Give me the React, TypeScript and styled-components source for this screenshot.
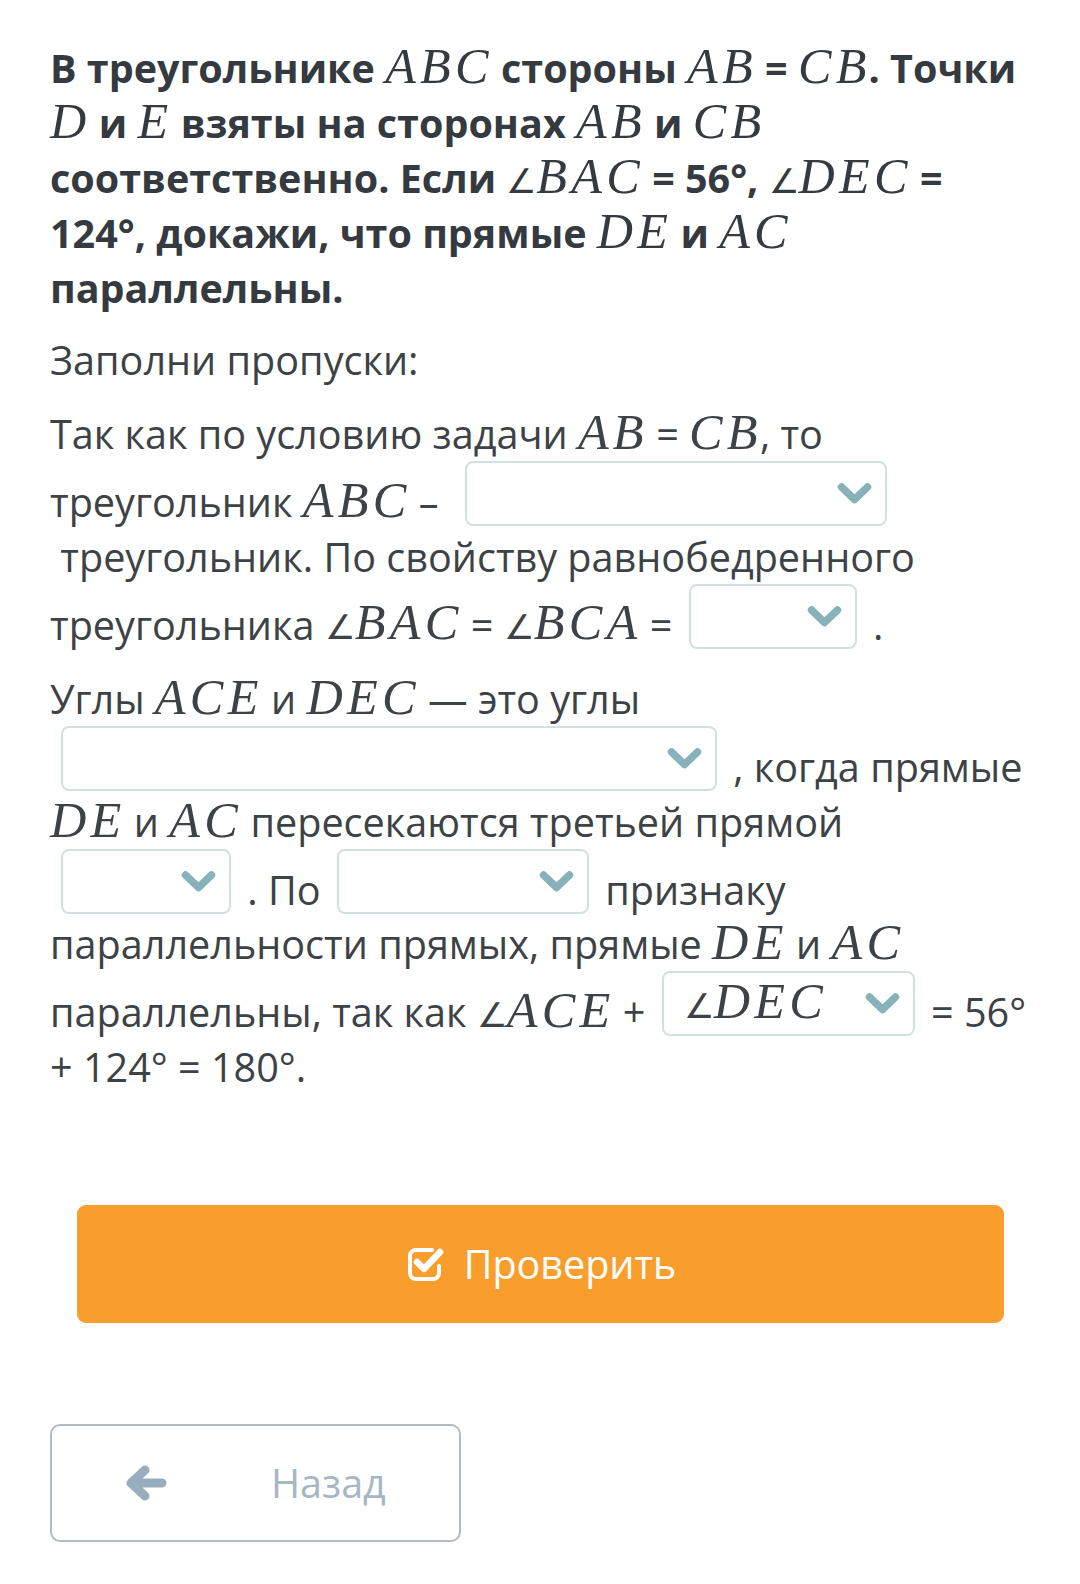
import React from "react";
import styled, { createGlobalStyle } from "styled-components";

const Global = createGlobalStyle`
  html, body { margin: 0; padding: 0; background: #ffffff; }
  body { font-family: "Open Sans", "Noto Sans", sans-serif; }
`;

const Page = styled.main`
  box-sizing: border-box;
  width: 1080px;
  padding: 41px 36px 60px 50px;
`;

const Heading = styled.h1`
  margin: 0;
  font-size: 39.5px;
  line-height: 55px;
  font-weight: 700;
  color: #343a40;
`;

const Instruction = styled.p`
  margin: 17px 0 0;
  font-size: 39.6px;
  line-height: 55px;
  color: #3d4247;
`;

const Body = styled.p<{ $gap?: number }>`
  margin: ${(p) => p.$gap ?? 0}px 0 0;
  font-size: 39.6px;
  line-height: 55px;
  color: #3d4247;
`;

const M = styled.span`
  font-family: "Liberation Serif", "Times New Roman", serif;
  font-style: italic;
  font-weight: 400;
  font-size: 1.27em;
  letter-spacing: 0.085em;
  margin-right: -0.04em;
  line-height: 0;
`;

const Angle = styled.span`
  font-family: "DejaVu Sans", sans-serif;
  font-style: normal;
  font-size: 0.68em;
  font-weight: 200;
  letter-spacing: 0;
  margin-right: 0;
`;

const Select = styled.span<{ $w: number; $lead?: boolean }>`
  display: inline-block;
  box-sizing: border-box;
  width: ${(p) => p.$w}px;
  height: 65px;
  margin: -1px 6px -2px ${(p) => (p.$lead ? 11 : 6)}px;
  border: 2px solid #d3e0e2;
  border-radius: 8px;
  background: #fff;
  vertical-align: -7.5px;
  overflow: hidden;
  color: #3d4247;
`;

const SelectInner = styled.span`
  display: flex;
  align-items: center;
  height: 100%;
  padding: 0 13px 0 20px;
`;

const SelectValue = styled.span`
  display: block;
  height: 61px;
  line-height: 61px;
  margin-top: -1px;
`;

const ChevronSvg = styled.svg`
  flex: none;
  margin-left: auto;
`;

const Chevron = () => (
  <ChevronSvg width="35" height="23" viewBox="0 0 35 23" fill="none">
    <path
      d="M4.5 5 L17.5 17.5 L30.5 5"
      stroke="#88b2ba"
      strokeWidth="7.5"
      strokeLinecap="round"
      strokeLinejoin="round"
    />
  </ChevronSvg>
);

const Actions = styled.div`
  display: flex;
  flex-direction: column;
  align-items: flex-start;
  margin-top: 110px;
`;

const CheckButton = styled.button`
  display: flex;
  align-items: center;
  justify-content: center;
  gap: 19px;
  width: 927px;
  height: 118px;
  margin-left: 27px;
  border: none;
  border-radius: 9px;
  background: #f99e2c;
  color: #fff;
  font-family: "Open Sans", sans-serif;
  font-size: 39.5px;
  padding: 0;
`;

const BackButton = styled.button`
  display: flex;
  align-items: center;
  gap: 104px;
  box-sizing: border-box;
  width: 411px;
  height: 118px;
  margin-top: 101px;
  padding: 0 0 0 73px;
  border: 2px solid #b1bcc2;
  border-radius: 10px;
  background: #fff;
  color: #a6b7c4;
  font-family: "Open Sans", sans-serif;
  font-size: 39.5px;
`;

const CheckIcon = () => (
  <svg width="40" height="40" viewBox="0 0 40 40" fill="none">
    <path
      d="M27 6 H11 a6 6 0 0 0 -6 6 v17 a6 6 0 0 0 6 6 h17 a6 6 0 0 0 6 -6 v-7"
      stroke="#fff"
      strokeWidth="4"
      strokeLinecap="round"
    />
    <path
      d="M12 18 L19 25 L35 8"
      stroke="#fff"
      strokeWidth="6.5"
      strokeLinecap="round"
      strokeLinejoin="round"
    />
  </svg>
);

const ArrowIcon = () => (
  <svg width="42" height="40" viewBox="0 0 42 40" fill="none">
    <path
      d="M37 20 H9 M20 7 L6 20 L20 33"
      stroke="#98adbe"
      strokeWidth="9"
      strokeLinecap="round"
      strokeLinejoin="round"
    />
  </svg>
);

const Dropdown = ({ w, lead, children }: { w: number; lead?: boolean; children?: React.ReactNode }) => (
  <Select $w={w} $lead={lead}>
    <SelectInner>
      {children ? <SelectValue>{children}</SelectValue> : null}
      <Chevron />
    </SelectInner>
  </Select>
);

export default function App() {
  return (
    <>
      <Global />
      <Page>
        <Heading>
          В треугольнике <M>ABC</M> стороны <M>AB</M> = <M>CB</M>. Точки
          <br />
          <M>D</M> и <M>E</M> взяты на сторонах <M>AB</M> и <M>CB</M>
          <br />
          соответственно. Если <M><Angle>∠</Angle>BAC</M> = 56°, <M><Angle>∠</Angle>DEC</M> =
          <br />
          124°, докажи, что прямые <M>DE</M> и <M>AC</M>
          <br />
          параллельны.
        </Heading>
        <Instruction>Заполни пропуски:</Instruction>
        <Body $gap={19}>
          Так как по условию задачи <M>AB</M> = <M>CB</M>, то
          <br />
          треугольник <M>ABC</M> –{"\u00a0"} <Dropdown w={422} />
          <br />
          {"\u00a0"}треугольник. По свойству равнобедренного
          <br />
          треугольника <M><Angle>∠</Angle>BAC</M> = <M><Angle>∠</Angle>BCA</M> = <Dropdown w={168} /> .
        </Body>
        <Body $gap={20}>
          Углы <M>ACE</M> и <M>DEC</M> — это углы
          <br />
          <Dropdown w={656} lead /> , когда прямые
          <br />
          <M>DE</M> и <M>AC</M> пересекаются третьей прямой
          <br />
          <Dropdown w={170} lead /> . По <Dropdown w={252} /> признаку
          <br />
          параллельности прямых, прямые <M>DE</M> и <M>AC</M>
          <br />
          параллельны, так как <M><Angle>∠</Angle>ACE</M> + <Dropdown w={253}><M><Angle>∠</Angle>DEC</M></Dropdown> = 56°
          <br />
          + 124° = 180°.
        </Body>
        <Actions>
          <CheckButton>
            <CheckIcon />
            Проверить
          </CheckButton>
          <BackButton>
            <ArrowIcon />
            Назад
          </BackButton>
        </Actions>
      </Page>
    </>
  );
}
